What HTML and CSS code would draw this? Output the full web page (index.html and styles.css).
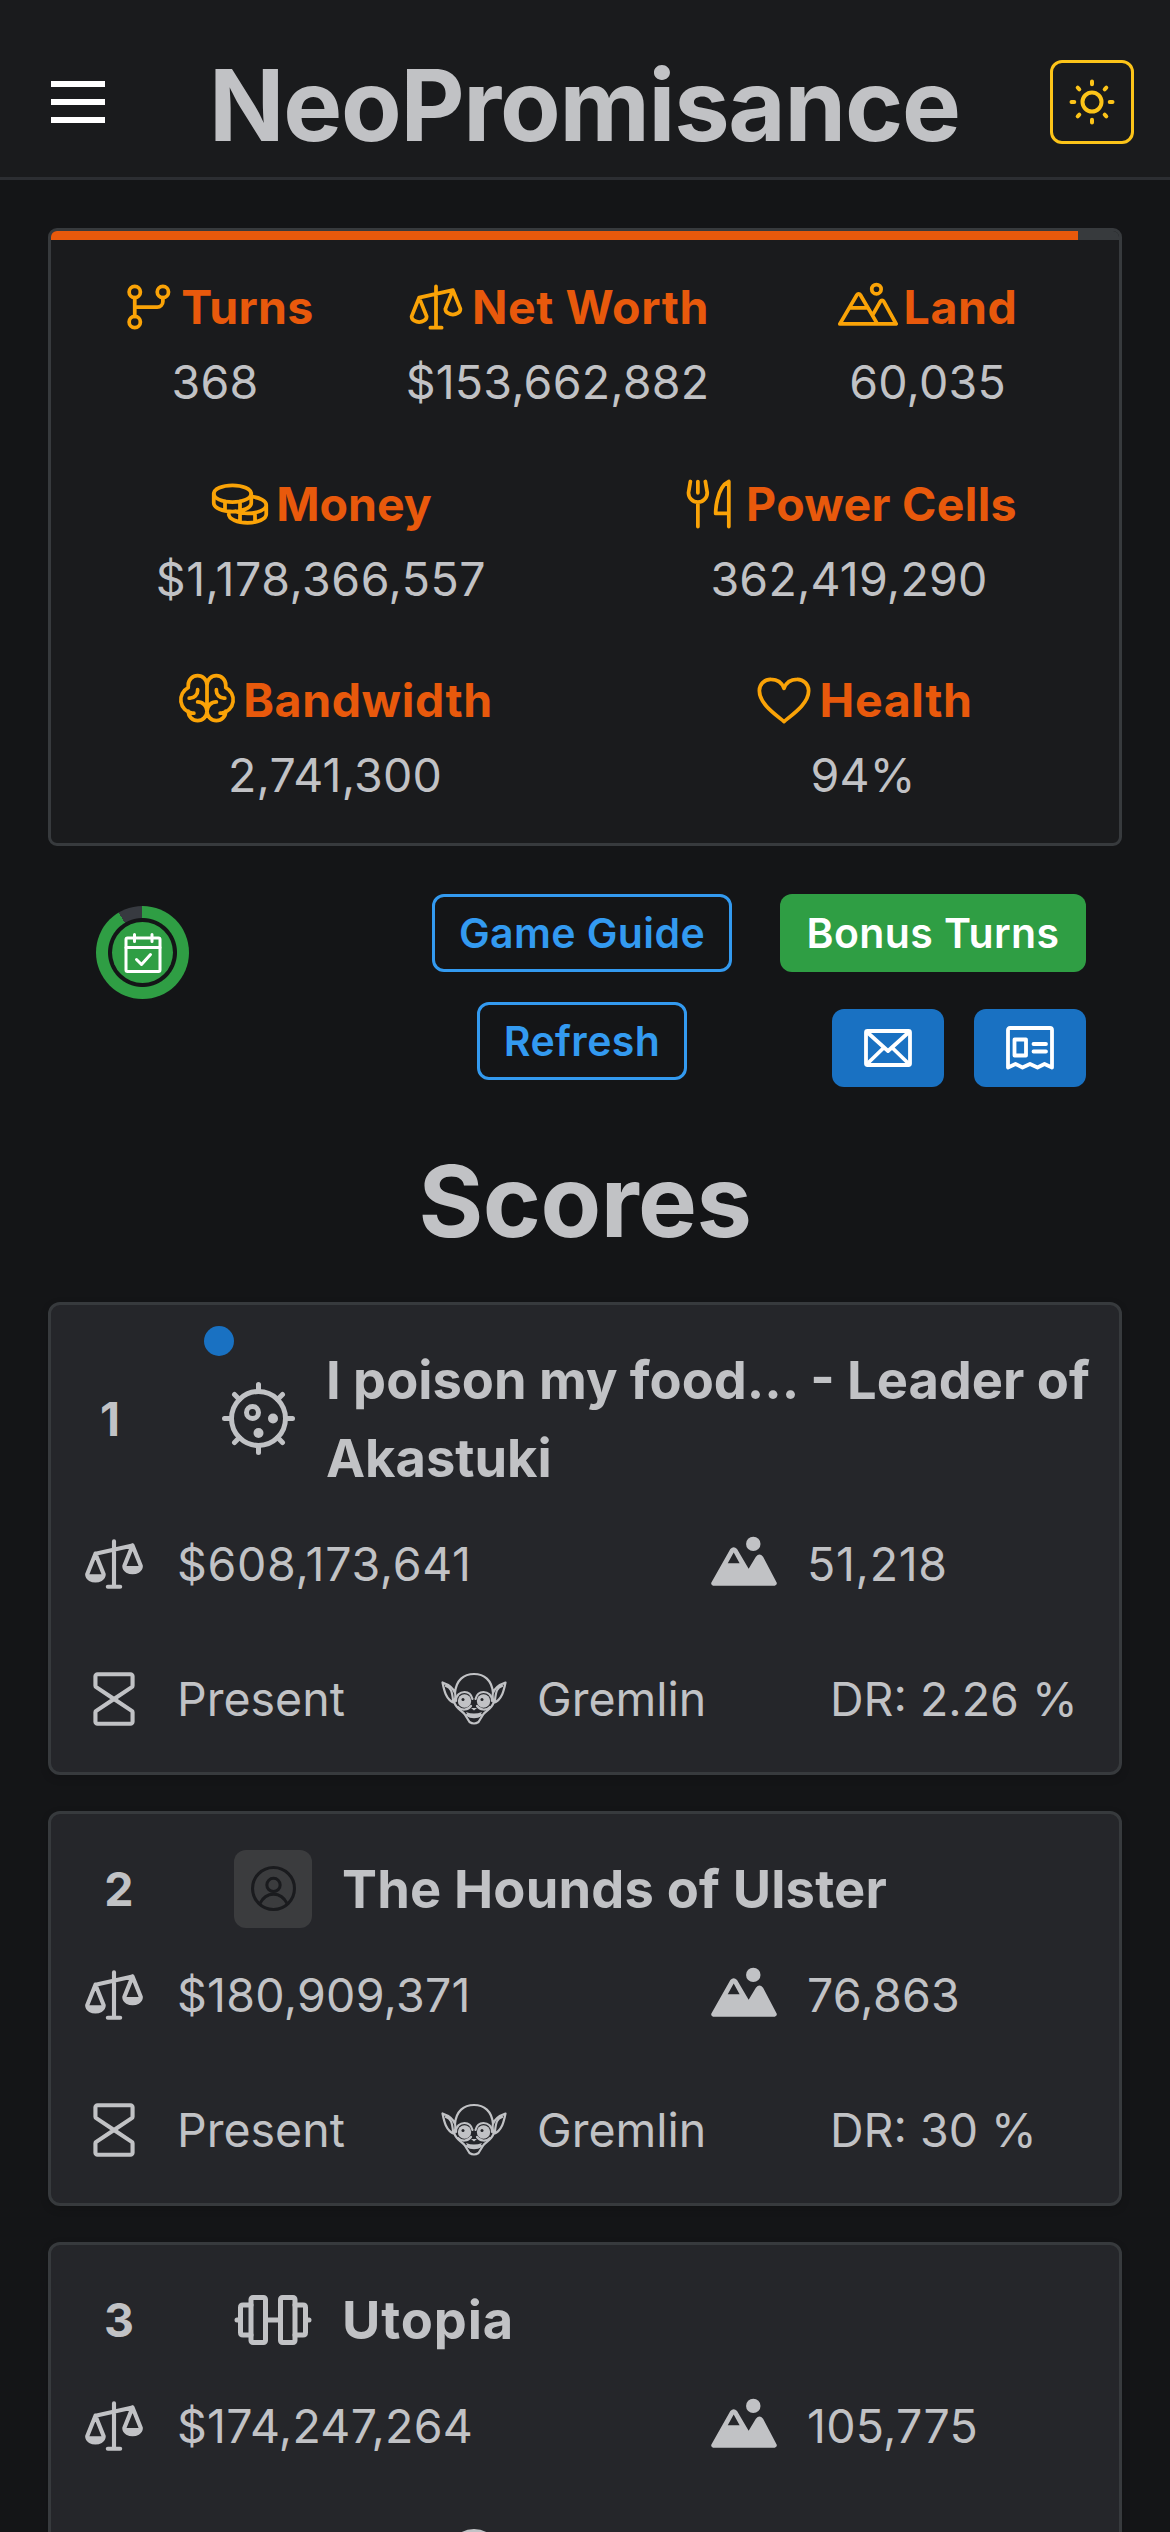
FILE: index.html
```
<!DOCTYPE html>
<html lang="en">
<head>
<meta charset="utf-8">
<title>NeoPromisance</title>
<link rel="stylesheet" href="styles.css">
</head>
<body>
<svg class="sprite" aria-hidden="true">
  <symbol id="i-branch" viewBox="0 0 256 256"><circle cx="80" cy="64" r="24"/><circle cx="200" cy="64" r="24"/><circle cx="80" cy="192" r="24"/><path d="M80 88v80M200 88v16a24 24 0 0 1-24 24H80"/></symbol>
  <symbol id="i-scales" viewBox="0 0 256 256"><path d="M128 40v176M104 216h48M56 88l144-32M24 168l32-80 32 80c0 17.700-20 24-32 24s-32-6.300-32-24zM168 136l32-80 32 80c0 17.700-20 24-32 24s-32-6.300-32-24z"/></symbol>
  <symbol id="i-scales-fill" viewBox="0 0 256 256"><path d="M128 40v176M104 216h48M56 88l144-32M24 168l32-80 32 80c0 17.700-20 24-32 24s-32-6.300-32-24zM168 136l32-80 32 80c0 17.700-20 24-32 24s-32-6.300-32-24z"/><path class="solid" d="M24 168h64c0 17.700-20 24-32 24s-32-6.300-32-24zM168 136h64c0 17.700-20 24-32 24s-32-6.300-32-24z"/></symbol>
  <symbol id="i-land" viewBox="0 0 256 256"><circle cx="164" cy="52" r="20"/><path d="M8 200 81 76a8 8 0 0 1 14 0l73 124M48 132h80M147 164l34-60a8 8 0 0 1 14 0l53 96H8"/></symbol>
  <symbol id="i-land-fill" viewBox="0 0 256 256"><circle class="solid" cx="164" cy="50" r="28"/><path class="solid" fill-rule="evenodd" d="M1 201 75 70q13-14 26 0l45 76 28-46q14-18 28 0l53 101q2 9-8 11H8q-9-2-7-11zM88 83l-23 42h46z"/></symbol>
  <symbol id="i-coins" viewBox="0 0 256 256"><ellipse cx="96" cy="84" rx="80" ry="36"/><path d="M16 84v40c0 19.900 35.800 36 80 36s80-16.100 80-36V84M64 117v40M128 117v40M176 96.700c36.500 3.400 64 18 64 35.300 0 19.900-35.800 36-80 36-19.600 0-37.500-3.200-51.400-8.400M80 159v13c0 19.900 35.800 36 80 36s80-16.100 80-36v-40M192 165v40M128 164v41"/></symbol>
  <symbol id="i-fork" viewBox="0 0 256 256"><path d="M72 32v48M72 128v96M40 32l-8 48a40 40 0 0 0 80 0l-8-48M204 168h-56s0-110 56-136v192"/></symbol>
  <symbol id="i-brain" viewBox="0 0 256 256"><path d="M88 136a40 40 0 1 1-40 40v-1M168 136a40 40 0 1 0 40 40v-1M128 176V64a40 40 0 0 0-80 0v8M128 64a40 40 0 0 1 80 0v8M72 184h-8A58 58 0 0 1 48 75.200M184 184h8a58 58 0 0 0 16-108.800M52 120h4a32 32 0 0 0 32-32v-4M204 120h-4a32 32 0 0 1-32-32v-4"/></symbol>
  <symbol id="i-heart" viewBox="0 0 256 256"><path d="M128 220c-36-30-105-76-105-130a48 48 0 0 1 50-50c25 0 46 14 55 38 9-24 30-38 55-38a48 48 0 0 1 50 50c0 54-69 100-105 130z"/></symbol>
  <symbol id="i-hourglass" viewBox="0 0 256 256"><path d="M64 32h128a8 8 0 0 1 8 8v36a8 8 0 0 1-3 6L128 128 59 82a8 8 0 0 1-3-6V40a8 8 0 0 1 8-8zM128 128l69 46a8 8 0 0 1 3 6v36a8 8 0 0 1-8 8H64a8 8 0 0 1-8-8v-36a8 8 0 0 1 3-6z"/></symbol>
  <symbol id="i-gremlin" viewBox="0 0 66 54">
    <g class="ink"><path d="M14 21C15 8 23 2 33 2s18 6 19 19M14 21C12 15 6 12 1.500 10.500 3 18 5 28 13.500 31c2 6 7 7 10 11l5 8q4.500 3 9 0l5-8c3-4 8-5 10-11C61 28 63 18 64.500 10.500 60 12 54 15 52 21M5 14c5 2 6 5 7 14M61 14c-5 2-6 5-7 14M14 21c1 3 0 6-.5 10M52 21c-1 3 0 6 .5 10"/>
    <path d="M15 29c0-6 4-9 8.500-9s7 3 8 7M51 29c0-6-4-9-8.500-9s-7 3-8 7M17 35c4 4 10 3 13-1M49 35c-4 4-10 3-13-1M26 43c4 3 10 3 14 0"/></g>
    <circle class="solid" cx="23.500" cy="29" r="6.700"/><circle class="solid" cx="42.500" cy="29" r="6.700"/><circle class="pupil" cx="22" cy="27.500" r="1.500"/><circle class="pupil" cx="41" cy="27.500" r="1.500"/><path class="solid" d="M25 40q8 3 16 0-2 5-8 5t-8-5zM30 36h6l-3 2.500z"/>
  </symbol>
  <symbol id="i-head" viewBox="0 0 66 66"><circle cx="33" cy="27" r="24"/><path d="M16 44v12q17 12 34 0V44"/></symbol>
  <symbol id="i-virus" viewBox="0 0 75 75"><circle cx="37.500" cy="37.500" r="27"/><path d="M37.500 10V3.500M37.500 65v6.500M10 37.500H3.500M65 37.500h6.500M18.400 18.400 13.500 13.500M56.600 18.400l4.900-4.900M18.400 56.600l-4.900 4.900M56.600 56.600l4.900 4.900"/><circle cx="31.500" cy="31.500" r="6"/><circle class="solid" cx="52" cy="37.500" r="5"/><circle class="solid" cx="37.500" cy="52" r="5"/></symbol>
  <symbol id="i-user" viewBox="0 0 44 44"><circle cx="22" cy="22" r="20.500"/><circle cx="22" cy="18.500" r="6.500"/><path d="M8.500 37C12 30 17 27.500 22 27.500S32 30 35.500 37"/></symbol>
  <symbol id="i-barbell" viewBox="0 0 78 54"><path d="M32 27h14M6 27H3M72 27h3"/><rect x="17" y="4.500" width="14.500" height="45" rx="2"/><rect x="46.500" y="4.500" width="14.500" height="45" rx="2"/><path d="M17 12H9q-2.500 0-2.500 2.500v25Q6.500 42 9 42h8M61 12h8q2.500 0 2.500 2.500v25Q71.500 42 69 42h-8"/></symbol>
  <symbol id="i-calendar" viewBox="0 0 40 42"><rect x="3" y="6" width="34" height="33.500" rx="1.500"/><path d="M3 15.500h34M11.500 2.500v7M29 2.500v7M13.500 27.500l5 5 9-10"/></symbol>
  <symbol id="i-mail" viewBox="0 0 48 38"><rect x="2" y="2" width="44" height="34" rx="1.500"/><path d="M3.500 3.500 24 22 44.500 3.500M3.500 34.500 19.500 19M44.500 34.500 28.500 19"/></symbol>
  <symbol id="i-news" viewBox="0 0 48 44"><path d="M2 41.500V4q0-2 2-2h40q2 0 2 2v37.500l-7.500-3.500-7 3.500L24 38l-7.500 3.500-7-3.500z"/><path d="M8.500 13.500H20v16H8.500zM27.500 18H40M27.500 25.500H40"/></symbol>
  <symbol id="i-sun" viewBox="0 0 46 46"><circle cx="23" cy="23" r="9.500"/><path d="M23 2.500v2.800M23 40.700v2.800M2.500 23h2.800M40.700 23h2.800M8.700 8.700l1.600 1.600M35.700 35.700l1.600 1.600M8.700 37.300l1.600-1.600M35.700 10.300l1.600-1.600"/></symbol>
</svg>

<header class="header">
  <button class="burger" aria-label="Menu"><span></span><span></span><span></span></button>
  <h1 class="brand">NeoPromisance</h1>
  <button class="theme" aria-label="Toggle theme"><svg><use href="#i-sun"/></svg></button>
</header>

<main class="main">
  <section class="stats">
    <div class="progress"><div class="progress-bar" style="width:96.200%"></div></div>
    <div class="stat-row cols-a">
      <div class="stat"><div class="label tight"><svg><use href="#i-branch"/></svg>Turns</div><div class="value">368</div></div>
      <div class="stat"><div class="label"><svg><use href="#i-scales"/></svg>Net Worth</div><div class="value">$153,662,882</div></div>
      <div class="stat"><div class="label"><svg><use href="#i-land"/></svg>Land</div><div class="value">60,035</div></div>
    </div>
    <div class="stat-row cols-b">
      <div class="stat"><div class="label flat"><svg><use href="#i-coins"/></svg>Money</div><div class="value money">$1,178,366,557</div></div>
      <div class="stat"><div class="label tight"><svg><use href="#i-fork"/></svg>Power Cells</div><div class="value">362,419,290</div></div>
    </div>
    <div class="stat-row cols-c">
      <div class="stat"><div class="label"><svg><use href="#i-brain"/></svg>Bandwidth</div><div class="value">2,741,300</div></div>
      <div class="stat"><div class="label"><svg><use href="#i-heart"/></svg>Health</div><div class="value">94%</div></div>
    </div>
  </section>

  <section class="actions">
    <div class="ring"><div class="ring-core"><svg><use href="#i-calendar"/></svg></div></div>
    <div class="links">
      <button class="btn outline">Game Guide</button>
      <button class="btn outline">Refresh</button>
    </div>
    <div class="tools">
      <button class="btn green">Bonus Turns</button>
      <div class="icon-btns">
        <button class="btn blue" aria-label="Mail"><svg class="mail"><use href="#i-mail"/></svg></button>
        <button class="btn blue" aria-label="News"><svg class="news"><use href="#i-news"/></svg></button>
      </div>
    </div>
  </section>

  <h1 class="scores-title">Scores</h1>

  <article class="card narrow">
    <span class="online"></span>
    <div class="card-head"><span class="rank">1</span><svg class="avatar virus"><use href="#i-virus"/></svg><h2>I poison my food... - Leader of Akastuki</h2></div>
    <div class="row two">
      <div class="cell"><svg><use href="#i-scales-fill"/></svg><span class="wide">$608,173,641</span></div>
      <div class="cell"><svg><use href="#i-land-fill"/></svg><span class="wide">51,218</span></div>
    </div>
    <div class="row three">
      <div class="cell"><svg><use href="#i-hourglass"/></svg>Present</div>
      <div class="cell"><svg class="gremlin"><use href="#i-gremlin"/></svg>Gremlin</div>
      <div class="cell">DR: 2.26 %</div>
    </div>
  </article>

  <article class="card">
    <div class="card-head"><span class="rank">2</span><span class="avatar tile"><svg><use href="#i-user"/></svg></span><h2 class="loose">The Hounds of Ulster</h2></div>
    <div class="row two">
      <div class="cell"><svg><use href="#i-scales-fill"/></svg><span>$180,909,371</span></div>
      <div class="cell"><svg><use href="#i-land-fill"/></svg><span>76,863</span></div>
    </div>
    <div class="row three">
      <div class="cell"><svg><use href="#i-hourglass"/></svg>Present</div>
      <div class="cell"><svg class="gremlin"><use href="#i-gremlin"/></svg>Gremlin</div>
      <div class="cell">DR: 30 %</div>
    </div>
  </article>

  <article class="card">
    <div class="card-head"><span class="rank">3</span><svg class="avatar barbell"><use href="#i-barbell"/></svg><h2 class="airy">Utopia</h2></div>
    <div class="row two">
      <div class="cell"><svg><use href="#i-scales-fill"/></svg><span>$174,247,264</span></div>
      <div class="cell"><svg><use href="#i-land-fill"/></svg><span>105,775</span></div>
    </div>
    <div class="row three">
      <div class="cell"><svg><use href="#i-hourglass"/></svg></div>
      <div class="cell"><svg><use href="#i-head"/></svg></div>
    </div>
  </article>
</main>
</body>
</html>
```
FILE: styles.css
```
* { box-sizing: border-box; }
html { height: 100%; overflow: hidden; background: #141517; }
body {
  margin: 0;
  height: 2532px;
  overflow: hidden;
  background: #141517;
  color: #c1c2c5;
  font-family: Inter, "Liberation Sans", sans-serif;
  font-size: 46.5px;
}
button { padding: 0; margin: 0; border: 0; background: none; font: inherit; color: inherit; }
h1, h2 { margin: 0; font-weight: 700; }
svg { fill: none; stroke: currentColor; stroke-width: 16; stroke-linecap: round; stroke-linejoin: round; flex: none; display: block; }
.sprite { position: absolute; width: 0; height: 0; }
.solid { fill: currentColor; stroke: none; }
.pupil { fill: #25262a; stroke: none; }
.ink { stroke-width: 2.2px; }
#i-head { stroke-width: 4px; }

.header {
  display: flex;
  align-items: center;
  height: 180px;
  padding: 27px 36px 0 51px;
  background: #1a1b1d;
  border-bottom: 3px solid #2c2e32;
}
.burger { display: flex; flex-direction: column; gap: 12px; width: 54px; }
.burger span { height: 6px; background: #fff; }
.brand { margin: 6px auto 0 104px; font-size: 99px; line-height: 120px; letter-spacing: -1.24px; }
.theme {
  display: flex; align-items: center; justify-content: center;
  width: 84px; height: 84px;
  border: 3px solid #fcc419; border-radius: 12px; color: #fcc419;
}
.theme svg { width: 46px; height: 46px; stroke-width: 4px; }

.main { padding: 48px 48px 0; }

.stats { height: 618px; border: 3px solid #373a3d; border-radius: 9px; background: #1a1b1d; overflow: hidden; }
.progress { height: 9px; margin-bottom: 30px; background: #373a3d; }
.progress-bar { height: 9px; background: #e8590c; }
.stat-row { display: grid; height: 149px; margin-bottom: 47.500px; }
.cols-a { grid-template-columns: 328px 357px 383px; }
.cols-b { grid-template-columns: 540px 516px; }
.cols-c { grid-template-columns: 568px 488px; }
.stat { display: flex; flex-direction: column; align-items: center; }
.label { display: flex; align-items: center; gap: 6px; height: 74px; font-weight: 700; letter-spacing: .6px; color: #e8590c; white-space: nowrap; }
.tight { gap: 5px; letter-spacing: .3px; }
.flat { letter-spacing: 0; }
.label svg { width: 60px; height: 60px; color: #faa307; }
.value { padding-top: 1px; line-height: 75px; letter-spacing: .2px; }
.money { letter-spacing: .53px; }

.actions { display: grid; grid-template-columns: 384px 300px 1fr; margin-top: 48px; height: 194px; }
.ring {
  display: flex; align-items: center; justify-content: center;
  width: 93px; height: 93px; margin: 12px 0 0 48px; border-radius: 50%;
  background: radial-gradient(circle, #141517 34px, transparent 35px), conic-gradient(#2f9e44 0 91.400%, #373a40 0);
}
.ring-core { display: flex; align-items: center; justify-content: center; width: 61px; height: 61px; border-radius: 50%; background: #2f9e44; color: #fff; }
.ring-core svg { width: 40px; height: 42px; stroke-width: 3px; }
.links { display: flex; flex-direction: column; align-items: center; gap: 30px; }
.tools { display: flex; flex-direction: column; align-items: flex-end; gap: 37px; padding-right: 36px; }
.btn { display: flex; align-items: center; justify-content: center; height: 78px; border-radius: 12px; font-size: 41px; font-weight: 600; letter-spacing: .4px; white-space: nowrap; }
.outline { padding: 0 24px; border: 3px solid #339af0; color: #339af0; }
.green { width: 306px; background: #2f9e44; color: #fff; }
.icon-btns { display: flex; gap: 30px; }
.blue { width: 112px; background: #1971c2; color: #fff; }
.mail, .news { width: 48px; stroke-width: 3.8px; }
.mail { height: 38px; }
.news { height: 44px; }

.scores-title { margin: 53px 0 41px; text-align: center; font-size: 99px; line-height: 120px; letter-spacing: -.5px; }

.card {
  position: relative;
  margin-bottom: 36px;
  padding: 36px 0 36px 30px;
  border: 3px solid #373a3d; border-radius: 12px;
  background: #25262a;
  box-shadow: 0 3px 9px rgba(0, 0, 0, .15);
}
.online { position: absolute; left: 153px; top: 21px; width: 30px; height: 30px; border-radius: 50%; background: #1971c2; }
.card-head { display: flex; align-items: center; height: 77px; }
.narrow .card-head { height: 155px; }
.rank { flex: none; width: 76px; margin-right: 77px; text-align: center; font-weight: 700; }
.narrow .rank { width: 58px; margin-right: 82px; }
.avatar { width: 78px; margin-right: 30px; flex: none; }
.virus { width: 75px; height: 75px; stroke-width: 5px; }
.tile { display: flex; align-items: center; justify-content: center; height: 78px; border-radius: 12px; background: #3b3c3e; color: #1a1b1e; }
.tile svg { width: 45px; height: 45px; stroke-width: 3px; }
.barbell { height: 54px; stroke-width: 5px; }
.card h2 { padding-top: 2px; font-size: 52.400px; line-height: 77.500px; }
.card .loose { letter-spacing: .2px; }
.card .airy { letter-spacing: .9px; }
.row { display: grid; height: 75px; }
.two { grid-template-columns: 630px 1fr; margin-top: 30px; }
.three { grid-template-columns: 360px 389px 1fr; margin-top: 60px; }
.cell { display: flex; align-items: center; gap: 30px; white-space: nowrap; }
.cell span { letter-spacing: .25px; }
.cell .wide { letter-spacing: .7px; }
.cell svg { width: 66px; height: 66px; }
.cell .gremlin { height: 54px; }
```
